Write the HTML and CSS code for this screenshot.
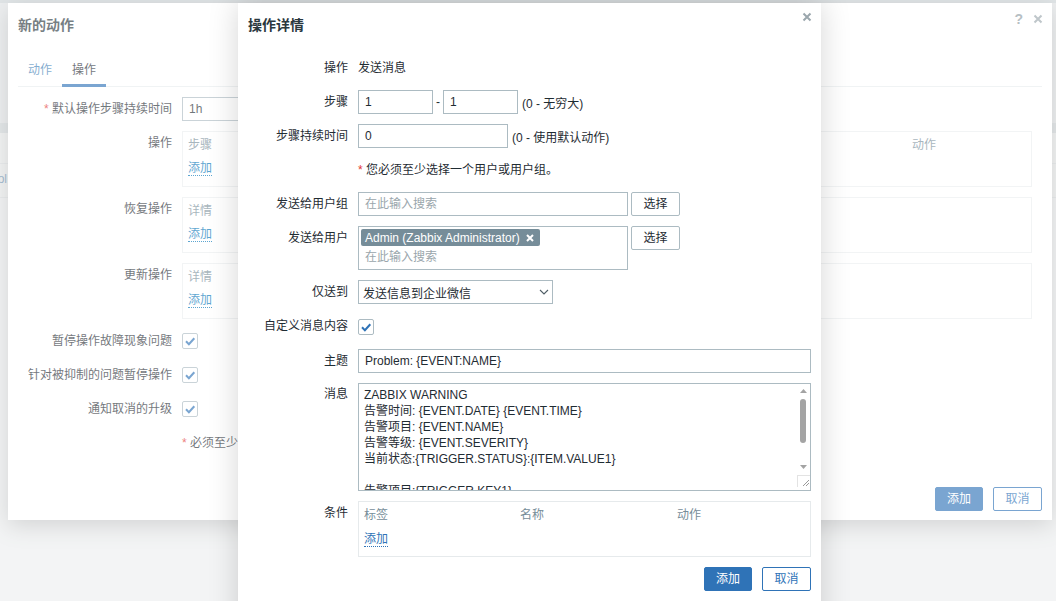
FILE: index.html
```html
<!DOCTYPE html>
<html lang="zh-CN">
<head>
<meta charset="utf-8">
<title>操作详情</title>
<link rel="stylesheet" href="styles.css">
</head>
<body>
<div class="screen">
  <div class="page-bg">
    <div class="pg-top"></div>
    <div class="pg-area"></div>
    <div class="pg-band"></div>
    <div class="pg-row"></div>
    <div class="pg-row pg-row-text"><span class="pg-link">Tool</span></div>
    <div class="pg-rest"></div>
  </div>

  <section class="dialog dialog-back">
    <header class="dlg-head">
      <h2 class="dlg-title">新的动作</h2>
      <div class="dlg-tools">
        <span class="dlg-help">?</span>
        <svg class="ico-x" viewBox="0 0 10 10"><path d="M1.5 1.5l7 7M8.5 1.5l-7 7"/></svg>
      </div>
    </header>
    <nav class="tabs">
      <span class="tab tab-link">动作</span>
      <span class="tab tab-active">操作</span>
    </nav>
    <div class="form form-back">
      <div class="lbl"><span class="req">*</span> 默认操作步骤持续时间</div>
      <div class="fld"><div class="inp w150">1h</div></div>

      <div class="lbl">操作</div>
      <div class="fld">
        <div class="op-box">
          <div class="op-head"><span>步骤</span><span>动作</span></div>
          <span class="link">添加</span>
        </div>
      </div>

      <div class="lbl">恢复操作</div>
      <div class="fld">
        <div class="op-box">
          <div class="op-head"><span>详情</span><span></span></div>
          <span class="link">添加</span>
        </div>
      </div>

      <div class="lbl">更新操作</div>
      <div class="fld">
        <div class="op-box">
          <div class="op-head"><span>详情</span><span></span></div>
          <span class="link">添加</span>
        </div>
      </div>

      <div class="lbl">暂停操作故障现象问题</div>
      <div class="fld fld-mid"><span class="cbx"><svg viewBox="0 0 14 14"><path d="M3 7.3l2.9 2.9L11.3 4.3"/></svg></span></div>

      <div class="lbl">针对被抑制的问题暂停操作</div>
      <div class="fld fld-mid"><span class="cbx"><svg viewBox="0 0 14 14"><path d="M3 7.3l2.9 2.9L11.3 4.3"/></svg></span></div>

      <div class="lbl">通知取消的升级</div>
      <div class="fld fld-mid"><span class="cbx"><svg viewBox="0 0 14 14"><path d="M3 7.3l2.9 2.9L11.3 4.3"/></svg></span></div>

      <div class="lbl"></div>
      <div class="fld txt"><span class="req">*</span> 必须至少设置一个操作。</div>
    </div>
    <footer class="dlg-foot dlg-foot-back">
      <button class="btn btn-primary">添加</button>
      <button class="btn btn-alt">取消</button>
    </footer>
  </section>

  <div class="overlay"></div>

  <section class="dialog dialog-front">
    <header class="dlg-head">
      <h2 class="dlg-title">操作详情</h2>
      <svg class="ico-x ico-x-front" viewBox="0 0 10 10"><path d="M1.5 1.5l7 7M8.5 1.5l-7 7"/></svg>
    </header>
    <div class="form form-front">
      <div class="lbl">操作</div>
      <div class="fld txt">发送消息</div>

      <div class="lbl">步骤</div>
      <div class="fld fld-inline">
        <div class="inp w75">1</div><span class="dash">-</span><div class="inp w75">1</div><span class="hint">(0 - 无穷大)</span>
      </div>

      <div class="lbl">步骤持续时间</div>
      <div class="fld fld-inline">
        <div class="inp w150">0</div><span class="hint">(0 - 使用默认动作)</span>
      </div>

      <div class="lbl"></div>
      <div class="fld txt"><span class="req">*</span> 您必须至少选择一个用户或用户组。</div>

      <div class="lbl">发送给用户组</div>
      <div class="fld fld-inline">
        <div class="inp w270 ph">在此输入搜索</div><button class="btn btn-grey">选择</button>
      </div>

      <div class="lbl">发送给用户</div>
      <div class="fld fld-inline fld-top">
        <div class="multi w270">
          <span class="tag">Admin (Zabbix Administrator)<svg class="tag-x" viewBox="0 0 8 8"><path d="M1 1l6 6M7 1L1 7"/></svg></span>
          <div class="ms-input ph">在此输入搜索</div>
        </div>
        <button class="btn btn-grey">选择</button>
      </div>

      <div class="lbl">仅送到</div>
      <div class="fld">
        <div class="select w195"><span>发送信息到企业微信</span><svg class="chev" viewBox="0 0 10 6"><path d="M1 1l4 4 4-4"/></svg></div>
      </div>

      <div class="lbl row-cbx">自定义消息内容</div>
      <div class="fld fld-mid row-cbx"><span class="cbx"><svg viewBox="0 0 14 14"><path d="M3 7.3l2.9 2.9L11.3 4.3"/></svg></span></div>

      <div class="lbl">主题</div>
      <div class="fld"><div class="inp wfull">Problem: {EVENT:NAME}</div></div>

      <div class="lbl lbl-ta">消息</div>
      <div class="fld">
        <div class="textarea">
          <div class="ta-text">ZABBIX WARNING
告警时间: {EVENT.DATE} {EVENT.TIME}
告警项目: {EVENT.NAME}
告警等级: {EVENT.SEVERITY}
当前状态:{TRIGGER.STATUS}:{ITEM.VALUE1}

告警项目:{TRIGGER.KEY1}</div>
          <div class="ta-scroll">
            <svg class="sb-arrow" viewBox="0 0 7 4"><path d="M0 4L3.5 0 7 4z"/></svg>
            <div class="sb-track"><div class="sb-thumb"></div></div>
            <svg class="sb-arrow" viewBox="0 0 7 4"><path d="M0 0L3.5 4 7 0z"/></svg>
            <div class="sb-grip"><svg viewBox="0 0 10 10"><path d="M9 3L3 9M9 6L6 9"/></svg></div>
          </div>
        </div>
      </div>

      <div class="lbl">条件</div>
      <div class="fld">
        <div class="cond-box">
          <div class="cond-head"><span>标签</span><span>名称</span><span>动作</span></div>
          <span class="link">添加</span>
        </div>
      </div>
    </div>
    <footer class="dlg-foot dlg-foot-front">
      <button class="btn btn-primary">添加</button>
      <button class="btn btn-alt">取消</button>
    </footer>
  </section>
</div>
</body>
</html>
```

FILE: styles.css
```css
* { box-sizing: border-box; margin: 0; padding: 0; }

html, body { width: 1056px; height: 601px; overflow: hidden; }

body {
  font-family: "Liberation Sans", "Noto Sans CJK SC", Arial, sans-serif;
  font-size: 12px;
  color: #1f2c33;
  background: #ecefef;
}

.screen { position: relative; width: 1056px; height: 601px; overflow: hidden; }

/* underlying page (double dimmed) */
.page-bg { height: 601px; display: flex; flex-direction: column; background: #eceeef; }
.pg-top { height: 3px; background: #cfd6d9; }
.pg-area { height: 120px; background: #e3e6e8; }
.pg-band { height: 10px; background: #d3d9dc; }
.pg-row { height: 31px; background: #ebeded; border-bottom: 1px solid #dde1e3; }
.pg-row-text { height: 34px; line-height: 30px; }
.pg-link { margin-left: -15px; color: #6f95b5; font-size: 12px; }
.pg-rest { flex: 1; background: #eceeef; }

/* dialogs */
.dialog {
  position: absolute;
  top: 3px;
  background: #fff;
  display: flex;
  flex-direction: column;
}
.dialog-back {
  left: 8px;
  width: 1044px;
  height: 517px;
  box-shadow: 0 5px 22px rgba(0, 0, 0, 0.22);
}
.dialog-front {
  left: 238px;
  width: 583px;
  height: 640px;
  box-shadow: 0 0 28px rgba(0, 0, 0, 0.17);
}

.overlay { position: absolute; inset: 0; background: rgba(255, 255, 255, 0.36); }

.dlg-head {
  display: flex;
  justify-content: space-between;
  align-items: flex-start;
  padding: 8px 9px 0 10px;
}
.dlg-title {
  margin-top: 7px;
  font-size: 14px;
  line-height: 14px;
  font-weight: bold;
  color: #2b383e;
}
.dlg-tools { display: flex; align-items: center; gap: 10px; height: 14px; margin-top: 1px; }
.dlg-help { color: #8f9ca3; font-size: 14px; font-weight: bold; line-height: 14px; }
.ico-x { width: 10px; height: 10px; fill: none; stroke: #9ba7ad; stroke-width: 2; }
.ico-x-front { margin-top: 1px; }

/* tabs */
.tabs {
  display: flex;
  margin: 19px 10px 0;
  border-bottom: 1px solid #e8ecee;
}
.tab {
  padding: 10px 10px 5px;
  line-height: 18px;
  border-bottom: 3px solid transparent;
  margin-bottom: -1px;
}
.tab-link { color: #3f7fb6; }
.tab-active { border-bottom-color: #2f73b7; color: #1f2c33; }

/* form grid */
.form { display: grid; column-gap: 10px; row-gap: 10px; }
.form-back { grid-template-columns: 154px 1fr; padding: 10px 10px 0; }
.form-front { grid-template-columns: 100px 1fr; padding: 24px 10px 0; }

.lbl { text-align: right; line-height: 24px; white-space: nowrap; }
.lbl-ta { line-height: 22px; }
.fld { min-height: 24px; }
.txt { line-height: 24px; }
.fld-inline { display: flex; align-items: center; }
.fld-top { align-items: flex-start; }
.fld-mid { display: flex; align-items: center; height: 24px; }
.row-cbx { height: 25px; }
.req { color: #e33734; }

.inp {
  height: 24px;
  line-height: 22px;
  border: 1px solid #acbbc2;
  background: #fff;
  padding: 0 6px;
  white-space: nowrap;
  overflow: hidden;
}
.w75 { width: 75px; }
.w150 { width: 150px; }
.w195 { width: 195px; }
.w270 { width: 270px; }
.wfull { width: 453px; }
.ph { color: #9aa6ac; }
.dash { margin: 0 3px; }
.hint { margin-left: 4px; }

.btn {
  height: 24px;
  line-height: 22px;
  font-family: inherit;
  font-size: 12px;
  padding: 0 11px;
  border: 1px solid #acbbc2;
  border-radius: 2px;
  background: #fff;
  color: #1f2c33;
}
.btn-grey { margin-left: 3px; width: 49px; padding: 0; }
.btn-primary { background: #2f73b7; border-color: #2f73b7; color: #fff; width: 48px; padding: 0; }
.btn-alt { background: #fff; border-color: #2f73b7; color: #2f73b7; width: 49px; padding: 0; }

/* multiselect */
.multi {
  height: 44px;
  border: 1px solid #acbbc2;
  padding: 2px;
  display: flex;
  flex-direction: column;
  align-items: flex-start;
}
.tag {
  display: inline-flex;
  align-items: center;
  height: 19px;
  background: #768d99;
  color: #fff;
  border-radius: 2px;
  padding: 0 6px 0 4px;
  white-space: nowrap;
}
.tag-x { width: 8px; height: 8px; margin-left: 6px; fill: none; stroke: #fff; stroke-width: 2; }
.ms-input { line-height: 19px; padding: 2px 0 0 4px; }

/* select */
.select {
  height: 24px;
  border: 1px solid #acbbc2;
  padding: 0 3px 0 4px;
  display: flex;
  align-items: center;
  justify-content: space-between;
}
.chev { width: 10px; height: 6px; fill: none; stroke: #4f5e66; stroke-width: 1.1; }

/* checkbox */
.cbx {
  width: 16px;
  height: 16px;
  border: 1px solid #acbbc2;
  border-radius: 2px;
  background: #fff;
  display: flex;
  align-items: center;
  justify-content: center;
}
.cbx svg { width: 14px; height: 14px; fill: none; stroke: #2f73b7; stroke-width: 2; }

/* textarea */
.textarea {
  width: 453px;
  height: 108px;
  border: 1px solid #acbbc2;
  display: flex;
  overflow: hidden;
}
.ta-text {
  flex: 1;
  padding: 3px 5px 0;
  line-height: 16px;
  white-space: pre-line;
  overflow: hidden;
}
.ta-scroll {
  width: 14px;
  display: flex;
  flex-direction: column;
  align-items: center;
  padding-top: 5px;
}
.sb-arrow { width: 7px; height: 4px; fill: #a3a3a3; flex: none; }
.sb-track { height: 72px; width: 14px; padding-top: 6px; display: flex; justify-content: center; }
.sb-thumb { width: 6px; height: 44px; border-radius: 3px; background: #a4a4a4; }
.sb-grip {
  margin-top: 6px;
  width: 13px;
  height: 12px;
  border-top: 1px solid #e3e3e3;
  border-left: 1px solid #e3e3e3;
  display: flex;
  align-items: flex-end;
  justify-content: flex-end;
}
.sb-grip svg { width: 10px; height: 10px; fill: none; stroke: #9a9a9a; stroke-width: 1; }

/* operation boxes */
.op-box {
  width: 850px;
  min-height: 56px;
  border: 1px solid #ebeef0;
  padding: 4px 0 0 5px;
}
.op-head {
  display: grid;
  grid-template-columns: 1fr 119px;
  line-height: 18px;
  color: #768d99;
}
.link {
  display: inline-block;
  margin-top: 7px;
  line-height: 14px;
  color: #0275b8;
  border-bottom: 1px dotted #0275b8;
}

.cond-box {
  width: 453px;
  min-height: 56px;
  border: 1px solid #e6eaec;
  padding: 4px 5px 0;
}
.cond-head {
  display: flex;
  line-height: 18px;
  color: #768d99;
}
.cond-head span:nth-child(1) { width: 156px; }
.cond-head span:nth-child(2) { width: 157px; }
.cond-box .link { margin-top: 8px; color: #2f73b7; border-bottom-color: #2f73b7; }

/* footers */
.dlg-foot { display: flex; justify-content: flex-end; gap: 10px; }
.dlg-foot-back { margin-top: auto; padding: 0 10px 9px 0; gap: 10px; }
.dlg-foot-front { margin-top: 10px; padding: 0 10px; }
```
